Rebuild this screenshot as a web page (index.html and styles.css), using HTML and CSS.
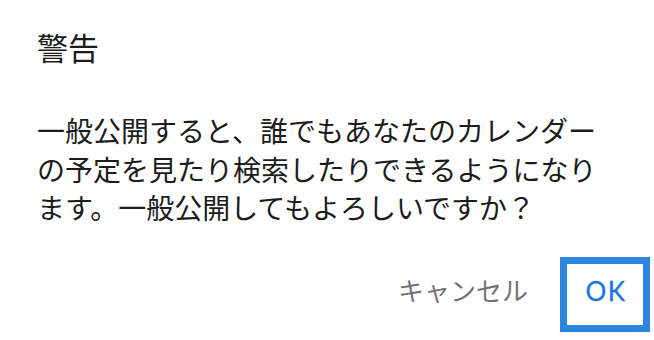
FILE: index.html
```html
<!DOCTYPE html>
<html lang="ja">
<head>
<meta charset="utf-8">
<link rel="stylesheet" href="styles.css">
</head>
<body>
<div class="dialog">
  <h1 class="title">警告</h1>
  <p class="message">一般公開すると、誰でもあなたのカレンダーの予定を見たり検索したりできるようになります。一般公開してもよろしいですか？</p>
  <div class="actions">
    <button class="btn cancel">キャンセル</button>
    <button class="btn ok">OK</button>
  </div>
</div>
</body>
</html>
```
FILE: styles.css
```css
html, body {
  margin: 0;
  padding: 0;
  background: #ffffff;
}
body {
  width: 654px;
  height: 340px;
  overflow: hidden;
  font-family: "Noto Sans CJK JP", "Noto Sans", sans-serif;
}
.dialog {
  padding: 27px 4px 0 37px;
}
.title {
  margin: 0;
  font-size: 31px;
  font-weight: 400;
  line-height: 40px;
  color: #1c1c1c;
}
.message {
  margin: 44px 0 0 0;
  width: 566px;
  font-size: 28px;
  line-height: 38.5px;
  color: #1c1c1c;
}
.actions {
  margin-top: 30px;
  display: flex;
  justify-content: flex-end;
  align-items: center;
  gap: 32px;
}
.btn {
  background: none;
  border: none;
  padding: 0;
  margin: 0;
  cursor: pointer;
}
.cancel {
  font-family: "Noto Sans CJK JP", sans-serif;
  font-size: 26px;
  color: #737373;
  line-height: 36px;
  margin-bottom: 8px;
}
.ok {
  width: 90px;
  height: 75px;
  box-sizing: border-box;
  border: 7px solid #2c86e0;
  font-family: Lato, "Noto Sans", sans-serif;
  font-weight: 400;
  font-size: 26px;
  letter-spacing: 1.5px;
  color: #1a73e8;
  -webkit-text-stroke: 0.3px #1a73e8;
  padding: 0 0 6px 2px;
}
```
